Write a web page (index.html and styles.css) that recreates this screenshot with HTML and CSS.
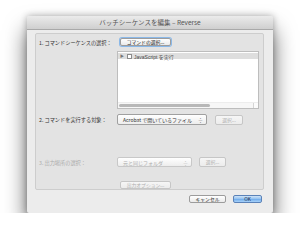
FILE: index.html
```html
<!DOCTYPE html>
<html lang="ja">
<head>
    <meta charset="UTF-8">
    <title>バッチシーケンスを編集 - Reverse</title>
    <link rel="stylesheet" href="styles.css">
</head>
<body>
    <div class="window">
        <div class="title-bar">バッチシーケンスを編集 – Reverse</div>
        <div class="window-body">
            <div class="group-box">
                <div class="row row-first">
                    <div class="label">1. コマンドシーケンスの選択：</div>
                    <div class="control">
                        <button class="push focus btn-wide">コマンドの選択...</button>
                    </div>
                </div>
                <div class="row row-list">
                    <div class="label"></div>
                    <div class="list-box">
                        <div class="list-inner">
                            <div class="list-row">
                                <span class="disclosure">▶</span>
                                <span class="check"></span>
                                <span class="item-text">JavaScript を実行</span>
                            </div>
                        </div>
                        <div class="h-scroll">
                            <div class="h-thumb"></div>
                            <div class="scroll-corner"></div>
                        </div>
                    </div>
                </div>
                <div class="row row-target">
                    <div class="label">2. コマンドを実行する対象：</div>
                    <div class="control">
                        <div class="popup popup-target">Acrobat で開いているファイル<span class="arrows">÷</span></div>
                        <button class="push disabled btn-small">選択...</button>
                    </div>
                </div>
                <div class="row row-output disabled-row">
                    <div class="label">3. 出力場所の選択：</div>
                    <div class="control">
                        <div class="popup popup-output">元と同じフォルダ<span class="arrows">÷</span></div>
                        <button class="push disabled btn-small">選択...</button>
                    </div>
                </div>
                <div class="row row-options">
                    <div class="label"></div>
                    <div class="control">
                        <button class="push disabled btn-wide">出力オプション...</button>
                    </div>
                </div>
            </div>
            <div class="footer">
                <button class="push btn-cancel">キャンセル</button>
                <button class="push btn-ok">OK</button>
            </div>
        </div>
    </div>
</body>
</html>
```

FILE: styles.css
```css
body {
    margin: 0;
    background-color: #fff;
    font-family: "Noto Sans CJK JP", "Liberation Sans", sans-serif;
    color: #333;
}
.window {
    margin: 16px 0 0 27px;
    width: 246px;
    height: 197px;
    background-color: #ececec;
    border-radius: 2px;
    box-shadow: 0 14px 22px rgba(0, 0, 0, 0.6), 0 0 7px rgba(0, 0, 0, 0.3);
    overflow: hidden;
}
.title-bar {
    height: 13px;
    line-height: 13px;
    text-align: center;
    font-size: 6.5px;
    color: #555;
    background: linear-gradient(#ebebeb, #cfcfcf);
    border-bottom: 1px solid #a9a9a9;
}
.window-body {
    padding: 3px 9px 0 8px;
}
.group-box {
    height: 151px;
    padding: 4px 0 0 0;
    background-color: #e3e3e3;
    border: 1px solid #cdcdcd;
    border-radius: 2px;
}
.row {
    display: flex;
    align-items: center;
}
.label {
    width: 81px;
    flex-shrink: 0;
    padding-left: 3px;
    box-sizing: border-box;
    font-size: 5.2px;
    color: #333;
    white-space: nowrap;
}
.control {
    display: flex;
    align-items: center;
}
.push {
    font-family: inherit;
    font-size: 4.8px;
    color: #222;
    height: 8px;
    padding: 0;
    line-height: 6px;
    background: linear-gradient(#fff, #eaeaea);
    border: 1px solid #9c9c9c;
    border-radius: 2px;
    text-align: center;
}
.push.focus {
    box-shadow: 0 0 0 1px #8ab8e8;
}
.push.disabled {
    color: #b0b0b0;
    border-color: #c6c6c6;
    background: linear-gradient(#f6f6f6, #ececec);
}
.btn-wide {
    width: 51px;
    margin-left: 3px;
}
.btn-small {
    width: 28px;
    height: 10px;
    margin-left: 8px;
}
.row-first {
    height: 8px;
}
.row-list {
    margin-top: 5px;
}
.list-box {
    width: 142px;
    height: 58px;
    background-color: #fff;
    border: 1px solid #bdbdbd;
    box-sizing: border-box;
    display: flex;
    flex-direction: column;
}
.list-inner {
    flex: 1;
}
.list-row {
    display: flex;
    align-items: center;
    height: 6px;
    margin-top: 1px;
    background-color: #dedede;
    font-size: 5px;
    color: #444;
}
.disclosure {
    font-size: 4px;
    color: #777;
    margin-left: 2px;
    width: 7px;
}
.check {
    width: 5px;
    height: 5px;
    background-color: #fff;
    border: 1px solid #8c8c8c;
    box-sizing: border-box;
    margin-right: 2px;
}
.item-text {
    font-family: "Liberation Sans", "Noto Sans CJK JP", sans-serif;
}
.h-scroll {
    height: 5px;
    display: flex;
    align-items: center;
    border-top: 1px solid #ededed;
    background-color: #f7f7f7;
}
.h-thumb {
    width: 91px;
    height: 3px;
    margin-left: 1px;
    border-radius: 2px;
    background-color: #b8b8b8;
}
.scroll-corner {
    margin-left: auto;
    width: 4px;
    height: 5px;
    border-left: 1px solid #d5d5d5;
    background-color: #fbfbfb;
}
.row-target {
    margin-top: 5px;
    height: 11px;
}
.popup {
    height: 11px;
    line-height: 9px;
    box-sizing: border-box;
    padding: 0 3px 0 5px;
    font-size: 5px;
    background: linear-gradient(#fff, #ededed);
    border: 1px solid #a0a0a0;
    border-radius: 2px;
    display: flex;
    justify-content: space-between;
    white-space: nowrap;
}
.arrows {
    font-size: 5px;
    color: #555;
}
.popup-target {
    width: 90px;
}
.popup-output {
    width: 75px;
    height: 10px;
    color: #b0b0b0;
    border-color: #c8c8c8;
}
.popup-output .arrows {
    color: #b0b0b0;
}
.row-output {
    margin-top: 32px;
    height: 10px;
}
.disabled-row .label {
    color: #aaa;
}
.row-output .btn-small {
    margin-left: 7px;
    width: 27px;
}
.row-options {
    margin-top: 14px;
    height: 8px;
}
.footer {
    display: flex;
    justify-content: flex-end;
    padding: 5px 2px 0 0;
}
.btn-cancel {
    width: 37px;
}
.btn-ok {
    width: 29px;
    margin-left: 7px;
    color: #1a2a40;
    border-color: #5b82b8;
    background: linear-gradient(#cfe4f8, #8fbff0 50%, #6eaaea 51%, #a8d2fa);
}
```
